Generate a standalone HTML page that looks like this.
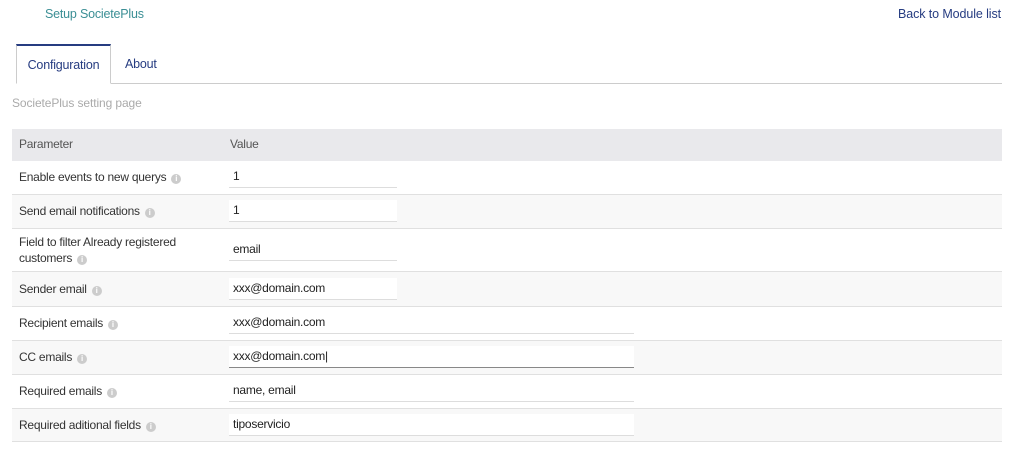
<!DOCTYPE html>
<html><head><meta charset="utf-8"><style>
*{box-sizing:border-box;margin:0;padding:0}
body{width:1024px;height:454px;background:#fff;font-family:"Liberation Sans",Arial,sans-serif;font-size:12px;color:#333;position:relative;overflow:hidden}
.a{position:absolute}
.title{left:45px;top:7px;font-size:12.5px;color:#3b8f95;letter-spacing:-0.2px}
.back{right:23px;top:7px;font-size:12.5px;color:#263c81;letter-spacing:-0.1px}
.tabs{left:16px;top:44px;width:986px;height:40px;border-bottom:1px solid #ccc}
.tab{position:absolute;top:0;height:40px;line-height:40px;font-size:12.5px;color:#263c81;letter-spacing:-0.2px}
.t1{left:0;width:95px;border:1px solid #ccc;border-top:2px solid #263c81;border-bottom:1px solid #fff;text-align:center;height:40px;line-height:38px}
.t2{left:109px}
.sub{left:12px;top:96px;color:#aaa;font-size:12px;letter-spacing:-0.1px}
table{position:absolute;left:12px;top:129px;width:990px;border-collapse:collapse}
td{padding:0 7px;border-bottom:1px solid #e0e0e0;font-size:12px;color:#333;vertical-align:middle;letter-spacing:-0.25px}
tr.h td{background:#e9e9ec;height:32px;border-bottom:none;color:#555;padding-bottom:2px}
tr.h td+td{padding-left:1px}
tr td:first-child{width:217px}
tr.g td{background:#f8f8f8}
.i{display:inline-block;width:10px;height:10px;border-radius:50%;background:#ccc;vertical-align:0;margin-left:5px;color:#fff;font-size:8px;line-height:10px;text-align:center;font-weight:bold;letter-spacing:0}
.in{display:block;height:22px;line-height:21px;padding-left:4px;border-bottom:1px solid #ddd;background:#fff;color:#222;margin-left:-7px}
.s{width:168px}.l{width:405px}
.f{border-bottom:1px solid #888}
</style></head><body>
<div class="a title">Setup SocietePlus</div>
<div class="a back">Back to Module list</div>
<div class="a tabs"><div class="tab t1">Configuration</div><div class="tab t2">About</div></div>
<div class="a sub">SocietePlus setting page</div>
<table>
<tr class="h"><td>Parameter</td><td>Value</td></tr>
<tr style="height:33px"><td>Enable events to new querys<span class="i">i</span></td><td><span class="in s">1</span></td></tr>
<tr class="g" style="height:34px"><td>Send email notifications<span class="i">i</span></td><td><span class="in s">1</span></td></tr>
<tr style="height:43px"><td style="line-height:16px">Field to filter Already registered customers<span class="i">i</span></td><td><span class="in s">email</span></td></tr>
<tr class="g" style="height:35px"><td>Sender email<span class="i">i</span></td><td><span class="in s">xxx@domain.com</span></td></tr>
<tr style="height:34px"><td>Recipient emails<span class="i">i</span></td><td><span class="in l">xxx@domain.com</span></td></tr>
<tr class="g" style="height:34px"><td>CC emails<span class="i">i</span></td><td><span class="in l f">xxx@domain.com|</span></td></tr>
<tr style="height:34px"><td>Required emails<span class="i">i</span></td><td><span class="in l">name, email</span></td></tr>
<tr class="g" style="height:33px"><td>Required aditional fields<span class="i">i</span></td><td><span class="in l">tiposervicio</span></td></tr>
</table>
</body></html>
